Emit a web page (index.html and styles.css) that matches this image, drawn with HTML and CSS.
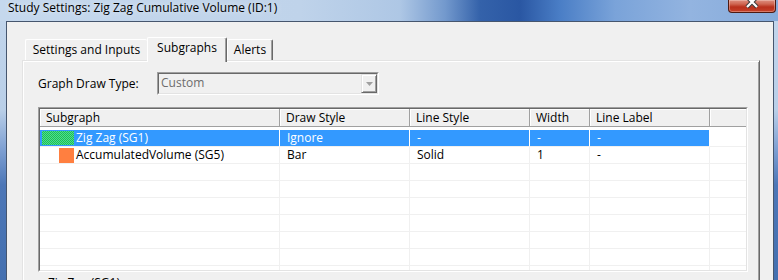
FILE: index.html
```html
<!DOCTYPE html>
<html>
<head>
<meta charset="utf-8">
<link rel="stylesheet" href="styles.css">
</head>
<body>
<div class="titlebar">
  <span class="title">Study Settings: Zig Zag Cumulative Volume (ID:1)</span>
  <div class="close">
    <svg width="14" height="10" viewBox="0 0 14 10">
      <path d="M2 -3 L12 7 M12 -3 L2 7" stroke="#3b3b3b" stroke-width="4.2" fill="none"/>
      <path d="M2 -3 L12 7 M12 -3 L2 7" stroke="#ffffff" stroke-width="2.2" fill="none"/>
    </svg>
  </div>
</div>
<div class="client">
  <div class="tabstrip">
    <div class="tab tab-settings">Settings and Inputs</div>
    <div class="tab tab-active">Subgraphs</div>
    <div class="tab tab-alerts">Alerts</div>
  </div>
  <div class="tabpage">
    <div class="field">
      <span class="label">Graph Draw Type:</span>
      <div class="combo">
        <div class="combo-in">
          <span class="combo-text">Custom</span>
          <span class="combo-btn">
            <svg width="7" height="4" viewBox="0 0 7 4"><path d="M0 0H7L3.5 4Z" fill="#a0a0a0"/></svg>
          </span>
        </div>
      </div>
    </div>
    <div class="list">
      <div class="list-in">
        <div class="hdr">
          <div class="hc">Subgraph</div>
          <div class="hc">Draw Style</div>
          <div class="hc">Line Style</div>
          <div class="hc">Width</div>
          <div class="hc">Line Label</div>
          <div class="hc hc-last"></div>
        </div>
        <div class="rows">
          <div class="row sel">
            <div class="c c1"><span class="sw-box"><span class="sw sw-green"></span></span><span>Zig Zag (SG1)</span></div>
            <div class="c">Ignore</div>
            <div class="c">-</div>
            <div class="c">-</div>
            <div class="c">-</div>
            <div class="c c-last"></div>
          </div>
          <div class="row">
            <div class="c c1"><span class="sw-box"><span class="sw sw-orange"></span></span><span>AccumulatedVolume (SG5)</span></div>
            <div class="c">Bar</div>
            <div class="c">Solid</div>
            <div class="c">1</div>
            <div class="c">-</div>
            <div class="c c-last"></div>
          </div>
          <div class="row"><div class="c c1"></div><div class="c"></div><div class="c"></div><div class="c"></div><div class="c"></div><div class="c c-last"></div></div>
          <div class="row"><div class="c c1"></div><div class="c"></div><div class="c"></div><div class="c"></div><div class="c"></div><div class="c c-last"></div></div>
          <div class="row"><div class="c c1"></div><div class="c"></div><div class="c"></div><div class="c"></div><div class="c"></div><div class="c c-last"></div></div>
          <div class="row"><div class="c c1"></div><div class="c"></div><div class="c"></div><div class="c"></div><div class="c"></div><div class="c c-last"></div></div>
          <div class="row"><div class="c c1"></div><div class="c"></div><div class="c"></div><div class="c"></div><div class="c"></div><div class="c c-last"></div></div>
          <div class="row"><div class="c c1"></div><div class="c"></div><div class="c"></div><div class="c"></div><div class="c"></div><div class="c c-last"></div></div>
          <div class="row"><div class="c c1"></div><div class="c"></div><div class="c"></div><div class="c"></div><div class="c"></div><div class="c c-last"></div></div>
        </div>
      </div>
    </div>
    <div class="below">Zig Zag (SG1)</div>
  </div>
</div>
</body>
</html>
```
FILE: styles.css
```css
* { box-sizing: border-box; }
html, body { margin: 0; padding: 0; }
body {
  width: 778px;
  height: 280px;
  overflow: hidden;
  font-family: "Open Sans", "Noto Sans", sans-serif;
  font-size: 12px;
  color: #000;
  background: linear-gradient(to bottom, #c3d6ec 0px, #b9cfe8 110px, #7d9fd2 150px, #4d77b7 185px, #4470b0 280px);
}
.titlebar {
  height: 21px;
  display: flex;
  justify-content: space-between;
  align-items: flex-start;
  background: linear-gradient(90deg, #c5d8ed 0px, #bfd3ea 300px, #aec7e5 400px, #7399cd 445px, #3462aa 480px, #2a57a3 520px, #4a7ec6 560px, #7aa3d9 615px, #93b4e0 690px, #86abdb 778px);
}
.title {
  padding-left: 8px;
  line-height: 15px;
  white-space: nowrap;
  text-shadow: 0 0 6px rgba(255,255,255,0.7);
}
.close {
  width: 48px;
  height: 13px;
  margin-right: 2px;
  border: 1px solid #4e1a12;
  border-top: none;
  border-radius: 0 0 4px 4px;
  background: linear-gradient(to bottom, #dd8f80 0px, #cf6752 4px, #b9301c 7px, #c8452d 13px);
  box-shadow: inset 0 0 0 1px rgba(255,230,220,0.35);
  display: flex;
  justify-content: center;
  align-items: flex-start;
}
.close svg { display: block; }

.client {
  margin: 0 4px 0 6px;
  height: 259px;
  border: 1px solid #46566e;
  border-bottom: none;
  background: #f0f0f0;
  padding: 15px 13px 0 15px;
  overflow: hidden;
}
.tabstrip {
  display: flex;
  align-items: flex-end;
  height: 23px;
  padding-left: 3px;
  position: relative;
  z-index: 2;
}
.tab {
  height: 21px;
  background: #f0f0f0;
  border-top: 1px solid #fff;
  border-left: 1px solid #fff;
  border-right: 1px solid #696969;
  box-shadow: inset -1px 0 #a0a0a0;
  border-radius: 2px 2px 0 0;
  text-align: center;
  line-height: 19px;
  white-space: nowrap;
}
.tab-settings { width: 122px; border-right: none; box-shadow: none; }
.tab-active {
  width: 80px;
  height: 25px;
  margin-bottom: -2px;
  line-height: 19px;
}
.tab-alerts { width: 46px; }

.tabpage {
  position: relative;
  z-index: 1;
  height: 230px;
  border-top: 1px solid #e3e3e3;
  border-left: 1px solid #e3e3e3;
  border-right: 1px solid #696969;
  box-shadow: inset 1px 1px #fff, inset -1px 0 #a0a0a0;
  padding: 11px 0 0 15px;
}
.field {
  display: flex;
  align-items: center;
  height: 23px;
}
.label {
  width: 119px;
  white-space: nowrap;
}
.combo {
  width: 222px;
  height: 23px;
  border: 1px solid;
  border-color: #a0a0a0 #fff #fff #a0a0a0;
}
.combo-in {
  height: 100%;
  border: 1px solid;
  border-color: #696969 #e3e3e3 #e3e3e3 #696969;
  display: flex;
  align-items: stretch;
  background: #f0f0f0;
}
.combo-text {
  flex: 1;
  padding-left: 2px;
  line-height: 18px;
  color: #6d6d6d;
}
.combo-btn {
  width: 16px;
  border: 1px solid;
  border-color: #e3e3e3 #696969 #696969 #e3e3e3;
  box-shadow: inset 1px 1px #fff, inset -1px -1px #a0a0a0;
  display: flex;
  align-items: center;
  justify-content: center;
}
.combo-btn svg { display: block; }

.list {
  margin-top: 12px;
  width: 710px;
  height: 165px;
  border: 1px solid;
  border-color: #a0a0a0 #fff #fff #a0a0a0;
}
.list-in {
  height: 100%;
  border: 1px solid;
  border-color: #696969 #e3e3e3 #e3e3e3 #696969;
  background: #fff;
  overflow: hidden;
}
.hdr, .row {
  display: grid;
  grid-template-columns: 240px 130px 120px 60px 120px 1fr;
}
.hc {
  height: 18px;
  background: #f0f0f0;
  border-right: 1px solid #a0a0a0;
  border-bottom: 1px solid #a0a0a0;
  box-shadow: inset 1px 1px #fff;
  padding-left: 6px;
  line-height: 17px;
  white-space: nowrap;
}
.hc-last { border-right: none; }
.rows { padding-top: 3px; }
.row { height: 17px; }
.c {
  border-right: 1px solid #f0f0f0;
  border-bottom: 1px solid #f0f0f0;
  padding-left: 7px;
  line-height: 16px;
  white-space: nowrap;
}
.c1 {
  display: flex;
  align-items: center;
  padding-left: 2px;
}
.c1 > span:last-child { margin-left: 2px; }
.c-last { border-right: none; }
.sel .c { background: #3399ff; color: #fff; border-right-color: #fff; }
.sel .c-last { background: #fff; }
.sw-box {
  width: 32px;
  height: 16px;
  display: flex;
  justify-content: flex-end;
  align-items: center;
}
.sw-green {
  width: 32px;
  height: 14px;
  background: repeating-conic-gradient(#1fc64a 0 25%, #4cd59a 0 50%) 0 0 / 2px 2px;
}
.sw-orange {
  width: 15px;
  height: 15px;
  background: #ff7f40;
}
.below {
  margin-top: 3px;
  padding-left: 10px;
  line-height: 16px;
}
```
